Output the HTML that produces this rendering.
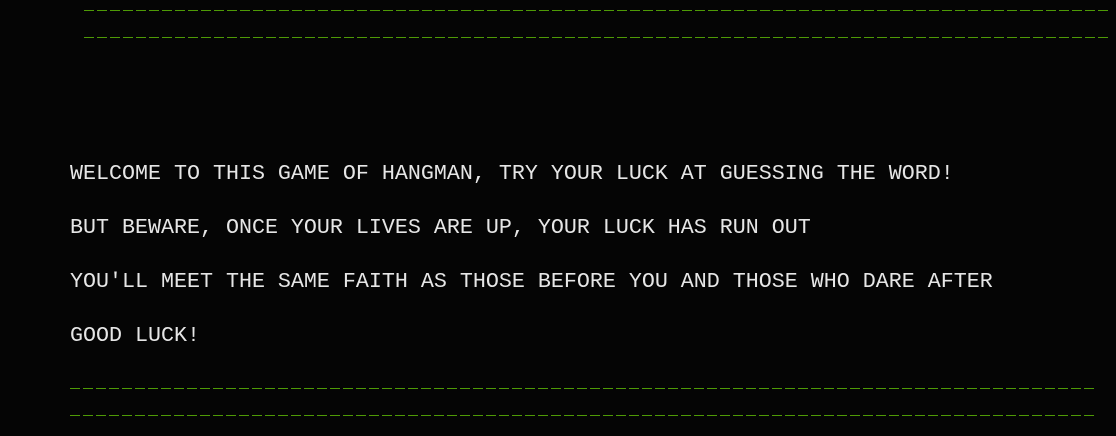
<!DOCTYPE html>
<html><head><style>
html,body{margin:0;padding:0;background:#050505;width:1116px;height:436px;overflow:hidden;position:relative}
.d{position:absolute;height:1px;background:repeating-linear-gradient(90deg,#4e9a06 0 10px,transparent 10px 13px)}
.t{position:absolute;left:70px;font-family:"Courier New","Liberation Mono",monospace;font-size:21.67px;color:#e6e6e6;white-space:pre;line-height:24px}
</style></head><body>
<div class="d" style="left:84px;top:10px;width:1027px"></div>
<div class="d" style="left:84px;top:37px;width:1027px"></div>
<div class="t" style="top:162px">WELCOME TO THIS GAME OF HANGMAN, TRY YOUR LUCK AT GUESSING THE WORD!</div>
<div class="t" style="top:216px">BUT BEWARE, ONCE YOUR LIVES ARE UP, YOUR LUCK HAS RUN OUT</div>
<div class="t" style="top:270px">YOU'LL MEET THE SAME FAITH AS THOSE BEFORE YOU AND THOSE WHO DARE AFTER</div>
<div class="t" style="top:324px">GOOD LUCK!</div>
<div class="d" style="left:70px;top:388px;width:1024px"></div>
<div class="d" style="left:70px;top:415px;width:1024px"></div>
</body></html>
